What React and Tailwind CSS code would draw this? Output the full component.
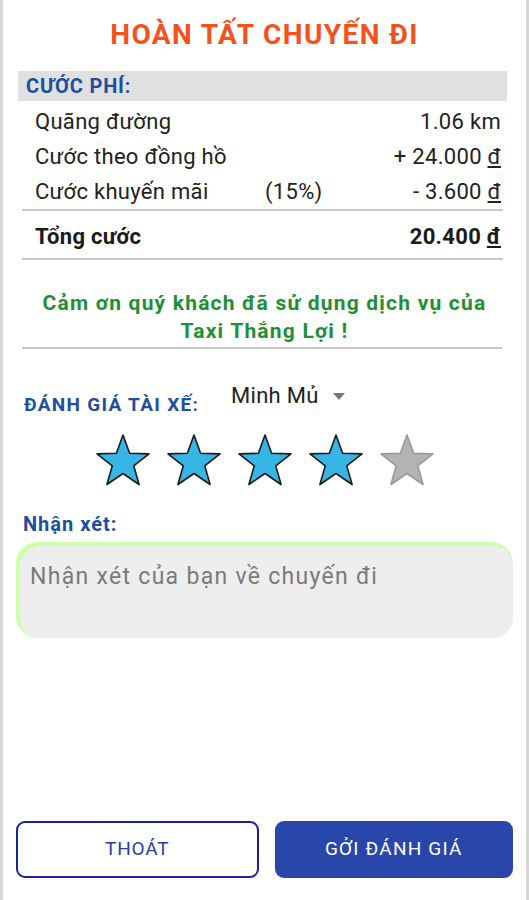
import React, { useState } from 'react';

const Star = ({ filled }) => (
    <svg width="58" height="54" viewBox="0 0 58 54">
        <path
            d="M29 2 L35.6 20.3 L55 20.9 L39.7 32.8 L45.1 51.5 L29 40.5 L12.9 51.5 L18.3 32.8 L3 20.9 L22.4 20.3 Z"
            fill={filled ? '#35b6e6' : '#b3b3b3'}
            stroke={filled ? '#1a1a1a' : '#9a9a9a'}
            strokeWidth="1.6"
            strokeLinejoin="round"
        />
    </svg>
);

const FeeRow = ({ label, note, value, bold }) => (
    <div className={`flex items-center h-[35px] pl-[17px] pr-[6px] text-[22px] tracking-[0.3px] ${bold ? 'font-bold text-[#1a1a1a]' : 'text-[#222]'}`}>
        <span className="w-[230px]">{label}</span>
        <span className="flex-1">{note}</span>
        <span>{value}</span>
    </div>
);

const App = () => {
    const [rating] = useState(4);

    return (
        <div
            className="h-[900px] w-full bg-white border-x-[3px] border-[#d6d6d6] flex flex-col overflow-hidden"
            style={{ fontFamily: 'Roboto, "Noto Sans", sans-serif' }}
        >
            <h1 className="text-center text-[28px] tracking-[1.4px] font-bold text-[#f4511e] pt-[16px] pb-[17px] leading-[38px]">
                HOÀN TẤT CHUYẾN ĐI
            </h1>

            {/* Fee block */}
            <div className="ml-[15px] mr-[19px]">
                <div className="bg-[#e0e0e0] h-[30px] flex items-center px-[8px] text-[20px] tracking-[0.8px] font-bold text-[#1c4fa0]">
                    CƯỚC PHÍ:
                </div>
                <div className="pt-[3px]">
                    <FeeRow label="Quãng đường" value="1.06 km" />
                    <FeeRow label="Cước theo đồng hồ" value={<>+ 24.000 <u>đ</u></>} />
                    <FeeRow label="Cước khuyến mãi" note="(15%)" value={<>- 3.600 <u>đ</u></>} />
                </div>
                <div className="mx-[4px] h-[2px] bg-[#c8c8c8]" />
                <div className="pt-[8px] pb-[4px]">
                    <FeeRow label="Tổng cước" value={<>20.400 <u>đ</u></>} bold />
                </div>
                <div className="mx-[4px] h-[2px] bg-[#c8c8c8]" />
            </div>

            <p className="mt-[29px] text-center text-[21px] tracking-[1.2px] font-bold text-[#1f8f35] leading-[28px]">
                Cảm ơn quý khách đã sử dụng dịch vụ của<br />Taxi Thắng Lợi !
            </p>
            <div className="ml-[19px] mr-[24px] mt-[2px] h-[2px] bg-[#c8c8c8]" />

            {/* Driver rating */}
            <div className="flex items-end mt-[35px] px-[21px]">
                <span className="text-[19px] tracking-[1.3px] font-bold text-[#1c4fa0] w-[207px] leading-[24px]">ĐÁNH GIÁ TÀI XẾ:</span>
                <span className="flex items-center gap-[14px] text-[22px] tracking-[0.3px] text-[#222] leading-[24px] mb-[9px]">
                    Minh Mủ
                    <svg width="12" height="7" viewBox="0 0 12 7"><path d="M0 0 L12 0 L6 7 Z" fill="#777" /></svg>
                </span>
            </div>

            <div className="flex justify-center gap-[13px] mt-[16px]">
                {[1, 2, 3, 4, 5].map((i) => (
                    <Star key={i} filled={i <= rating} />
                ))}
            </div>

            <div className="px-[20px] mt-[24px] text-[20px] tracking-[1px] font-bold text-[#1c4fa0] leading-[26px]">Nhận xét:</div>
            <div className="mx-[13px] mt-[5px] h-[96px] rounded-[22px] bg-[#ccffaa] pl-[4px] pt-[4px]">
                <div className="h-full rounded-[20px] bg-[#eeeeee] px-[10px] pt-[14px] text-[23px] tracking-[1.3px] text-[#7a7a7a]">
                    Nhận xét của bạn về chuyến đi
                </div>
            </div>

            {/* Buttons */}
            <div className="mt-auto mb-[22px] px-[13px] flex gap-[16px]">
                <button className="flex-1 h-[57px] rounded-[9px] border-2 border-[#1a22a0] bg-white text-[#2b3c9e] text-[19px] tracking-[0.8px]">
                    THOÁT
                </button>
                <button className="flex-1 h-[57px] rounded-[9px] bg-[#2946aa] text-white text-[19px] tracking-[1.2px]">
                    GỞI ĐÁNH GIÁ
                </button>
            </div>
        </div>
    );
};

export default App;
